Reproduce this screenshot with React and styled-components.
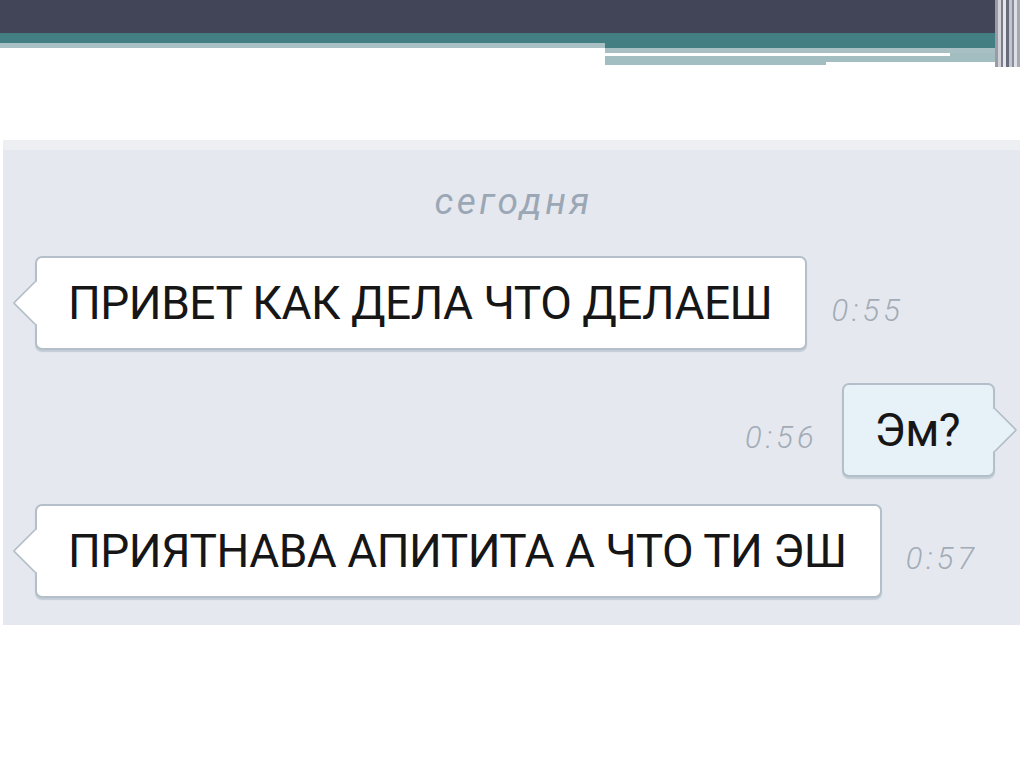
import styled, { createGlobalStyle } from 'styled-components';

const GlobalStyle = createGlobalStyle`
  html, body {
    margin: 0;
    padding: 0;
    background: #ffffff;
  }
  body {
    font-family: Roboto, "Liberation Sans", Arial, sans-serif;
  }
`

const messages = [
  { id: 1, text: 'ПРИВЕТ КАК ДЕЛА ЧТО ДЕЛАЕШ', time: '0:55', mine: false, gap: 0 },
  { id: 2, text: 'Эм?', time: '0:56', mine: true, gap: 33 },
  { id: 3, text: 'ПРИЯТНАВА АПИТИТА А ЧТО ТИ ЭШ', time: '0:57', mine: false, gap: 27 },
]

const stripes = ['#9a9ba8', '#d0d2d8', '#7c7e8d', '#e4e6ea', '#686b7c', '#c2c5cc', '#8a8d9b', '#dde0e4', '#a6a9b4']

function App() {
  return <Page>
    <GlobalStyle />
    <Header>
      <HeaderMain>
        <DarkBar />
        <TealBar />
        <HeaderRow>
          <HeaderLeft>
            <PaleLine />
          </HeaderLeft>
          <HeaderRight>
            <TealTail />
            <PaleLine />
            <SplitLine>
              <WhitePart style={{ width: 345 }} />
            </SplitLine>
            <PaleBand />
            <SplitLine>
              <Spacer style={{ width: 221 }} />
              <WhitePart style={{ flex: 1 }} />
            </SplitLine>
          </HeaderRight>
        </HeaderRow>
      </HeaderMain>
      <Stripes>
        {stripes.map((c, i) => <Stripe key={i} color={c} />)}
      </Stripes>
    </Header>

    <Chat>
      <ChatTop />
      <DateLabel>сегодня</DateLabel>
      <Messages>
        {messages.map((m) => (
          <Row key={m.id} mine={m.mine} gap={m.gap}>
            {m.mine && <Time>{m.time}</Time>}
            <Bubble mine={m.mine}>{m.text}</Bubble>
            {!m.mine && <Time>{m.time}</Time>}
          </Row>
        ))}
      </Messages>
    </Chat>
  </Page>
}

export default App;

const Page = styled.div`
  width: 1024px;
  height: 767px;
  background: #ffffff;
  overflow: hidden;
`
const Header = styled.div`
  display: flex;
  height: 67px;
`
const HeaderMain = styled.div`
  width: 995px;
  display: flex;
  flex-direction: column;
`
const DarkBar = styled.div`
  height: 33px;
  background: #424457;
`
const TealBar = styled.div`
  height: 10px;
  background: #437e83;
`
const HeaderRow = styled.div`
  display: flex;
  flex: 1;
`
const HeaderLeft = styled.div`
  width: 605px;
`
const HeaderRight = styled.div`
  flex: 1;
  display: flex;
  flex-direction: column;
`
const TealTail = styled.div`
  height: 5px;
  background: #437e83;
`
const PaleLine = styled.div`
  height: 5px;
  background: #a8c0c3;
`
const SplitLine = styled.div`
  height: 3px;
  display: flex;
  background: #a3bec1;
`
const WhitePart = styled.div`
  background: #ffffff;
`
const Spacer = styled.div``
const PaleBand = styled.div`
  height: 6px;
  background: #a3bec1;
`
const Stripes = styled.div`
  display: flex;
  width: 25px;
`
const Stripe = styled.div`
  flex: 1;
  background: ${p => p.color};
`

const Chat = styled.div`
  margin: 73px 4px 0 3px;
  height: 485px;
  background: #e5e9ef;
  display: flex;
  flex-direction: column;
`
const ChatTop = styled.div`
  height: 10px;
  background: #edeff2;
`
const DateLabel = styled.div`
  margin-top: 32px;
  height: 40px;
  padding-left: 4px;
  text-align: center;
  font-style: italic;
  font-size: 37px;
  letter-spacing: 3.5px;
  line-height: 40px;
  color: #9ba7b5;
`
const Messages = styled.div`
  margin-top: 34px;
  display: flex;
  flex-direction: column;
`
const Row = styled.div`
  display: flex;
  align-items: center;
  justify-content: ${p => p.mine ? 'flex-end' : 'flex-start'};
  padding: ${p => p.mine ? '0 25px 0 0' : '0 0 0 32px'};
  margin-top: ${p => p.gap}px;
  gap: 24px;
`
const Bubble = styled.div`
  position: relative;
  height: 94px;
  box-sizing: border-box;
  display: flex;
  align-items: center;
  padding: 0 33px 0 31px;
  background: ${p => p.mine ? '#e7f1f8' : '#ffffff'};
  border: 2px solid #b4bfca;
  border-radius: 7px;
  box-shadow: 0 2px 1px #c3ccd6;
  font-size: 46px;
  letter-spacing: -0.5px;
  color: #161616;
  white-space: nowrap;

  &::before {
    content: '';
    position: absolute;
    top: 50%;
    ${p => p.mine ? 'right: -2px;' : 'left: -2px;'}
    width: 30px;
    height: 30px;
    background: ${p => p.mine ? '#e7f1f8' : '#ffffff'};
    border: solid #b4bfca;
    border-width: ${p => p.mine ? '2px 2px 0 0' : '0 0 2px 2px'};
    transform: translate(${p => p.mine ? '50%' : '-50%'}, -50%) rotate(45deg);
    border-radius: 2px;
  }
`
const Time = styled.div`
  font-style: italic;
  font-weight: 300;
  font-size: 31px;
  letter-spacing: 4px;
  color: #a3abb6;
  margin-top: 14px;
`
